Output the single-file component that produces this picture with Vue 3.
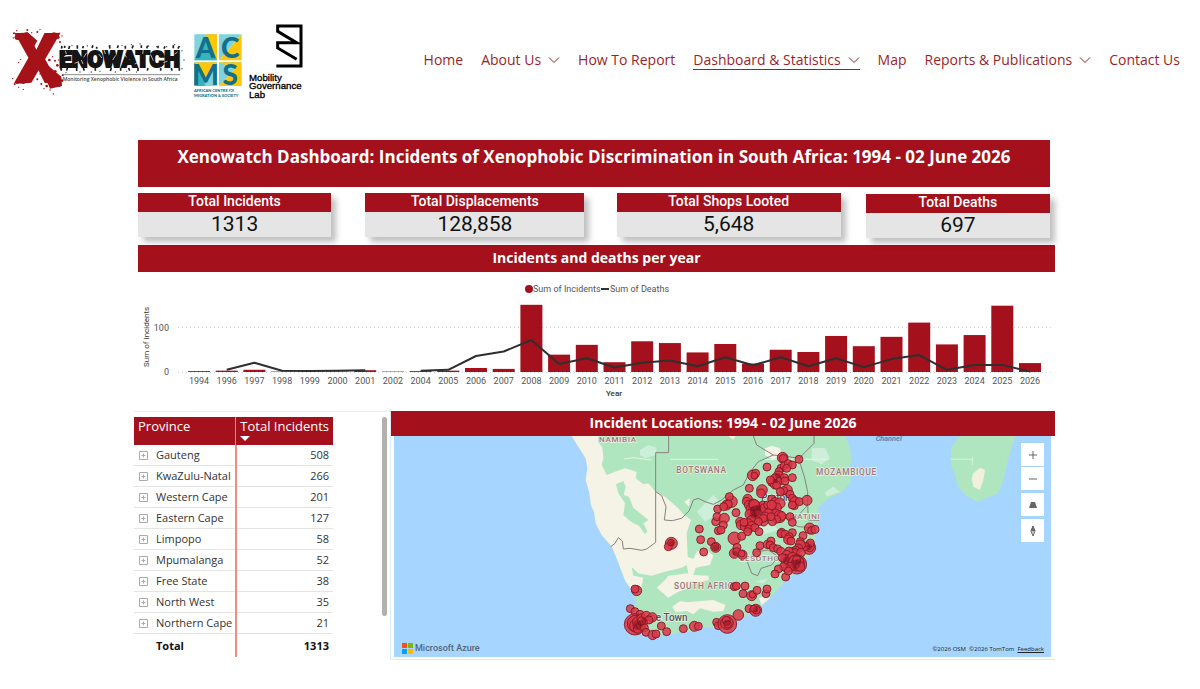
<script setup>
const nav = [
  { label: 'Home' },
  { label: 'About Us', menu: true },
  { label: 'How To Report' },
  { label: 'Dashboard & Statistics', menu: true, active: true },
  { label: 'Map' },
  { label: 'Reports & Publications', menu: true },
  { label: 'Contact Us' },
]

const stats = [
  { label: 'Total Incidents', value: '1313' },
  { label: 'Total Displacements', value: '128,858' },
  { label: 'Total Shops Looted', value: '5,648' },
  { label: 'Total Deaths', value: '697' },
]

const provinces = [
  ['Gauteng', 508],
  ['KwaZulu-Natal', 266],
  ['Western Cape', 201],
  ['Eastern Cape', 127],
  ['Limpopo', 58],
  ['Mpumalanga', 52],
  ['Free State', 38],
  ['North West', 35],
  ['Northern Cape', 21],
]

// year, incidents, deaths
const series = [
  [1994, 2, null], [1996, 3, 5], [1997, 5, 21], [1998, 1, 3], [1999, 1, 2], [2000, 1, 3],
  [2001, 4, 4], [2002, 1, null], [2004, 2, 3], [2005, 3, 5], [2006, 9, 36], [2007, 7, 46],
  [2008, 151, 72], [2009, 39, 18], [2010, 61, 31], [2011, 22, 10], [2012, 69, 21], [2013, 65, 26],
  [2014, 44, 13], [2015, 63, 33], [2016, 19, 15], [2017, 50, 33], [2018, 45, 13], [2019, 81, 31],
  [2020, 58, 11], [2021, 79, 29], [2022, 111, 38], [2023, 62, 5], [2024, 83, 16], [2025, 149, 16],
  [2026, 20, 1],
]
const base = 90
const unit = 0.445
const bars = series.map(([year, n], i) => ({
  year,
  cx: 61 + i * 27.7,
  y: base - n * unit,
  h: n * unit,
}))
let pen = false
const deathPath = series
  .map(([, , d], i) => {
    if (d === null) {
      pen = false
      return ''
    }
    const cmd = pen ? 'L' : 'M'
    pen = true
    return `${cmd}${(61 + i * 27.7).toFixed(1)} ${(base - d * unit).toFixed(1)}`
  })
  .join('')

// incident markers: x, y, radius
const markers = [
  [859, 415, 18], [850, 425, 12], [858, 413, 10], [943, 372], [947, 404], [979, 410], [992, 427, 15],
  [991, 426, 11], [956, 441], [1000, 377], [992, 350], [996, 335], [998, 312],
  [755, 557, 15], [750, 552, 12],
  [736, 611], [750, 620], [765, 628], [750, 658, 32], [752, 656, 25], [754, 662, 20], [758, 650, 15],
  [758, 672, 13], [770, 640, 14], [784, 633, 14], [802, 637, 14], [792, 645, 12], [775, 652], [766, 662],
  [778, 668], [783, 682], [803, 690, 14], [813, 687], [770, 648], [829, 663], [845, 680], [895, 671],
  [928, 664, 15], [940, 664], [995, 652, 12], [1000, 662],
  [1027, 657, 28], [1026, 654, 19], [1024, 646, 12], [1028, 658, 11], [1060, 630, 16], [1092, 611],
  [1112, 616, 18], [1114, 615, 12], [1106, 611, 10],
  [1048, 545], [1054, 543], [1080, 543], [1074, 566], [1100, 572, 15], [1102, 569, 10], [1116, 556], [1143, 566], [1146, 552],
  [1193, 158, 16], [1195, 160, 12], [1242, 163], [1146, 186], [1103, 211, 16], [1112, 205], [1108, 212, 10],
  [1188, 190], [1198, 182], [1210, 176], [1222, 180], [1205, 190], [1182, 200], [1180, 215, 17], [1170, 222, 15],
  [1160, 232], [1170, 238, 14], [1184, 228], [1198, 218], [1222, 218], [1200, 228], [1156, 225], [1175, 241],
  [1093, 250], [1131, 255, 16], [1128, 265, 13], [1206, 255, 16], [1196, 257], [1186, 260], [1215, 268],
  [1222, 280], [1230, 290, 15], [1228, 302], [1243, 290], [1266, 286, 15], [1222, 300],
  [1040, 290, 17], [1033, 275], [1025, 300, 15], [1030, 297, 12], [1053, 323], [1018, 340, 15], [1015, 360],
  [1008, 375], [1016, 305, 12],
  [1088, 282, 14], [1085, 290, 13], [1092, 300, 14], [1105, 296, 14], [1112, 310, 22], [1115, 320, 24],
  [1107, 322, 20], [1118, 310, 18], [1098, 312, 15], [1108, 300, 16], [1125, 322, 15], [1108, 335, 18],
  [1120, 330, 16], [1095, 328, 15], [1110, 345, 14], [1100, 345, 14], [1134, 300, 12], [1138, 310, 14],
  [1148, 300], [1160, 282], [1170, 292, 14], [1184, 295, 16], [1175, 308, 14], [1160, 315, 14], [1150, 325, 14],
  [1140, 335, 14], [1160, 300, 14], [1173, 325, 13], [1184, 335, 18], [1190, 333, 13], [1175, 343], [1162, 350],
  [1158, 335], [1136, 350, 13], [1135, 340], [1120, 350], [1065, 350, 13], [1068, 360, 14], [1080, 365, 14],
  [1090, 355, 14], [1100, 362, 13], [1092, 372], [1110, 368], [1088, 380], [1122, 380], [1077, 352],
  [1215, 335, 12], [1222, 352], [1274, 370, 16], [1280, 376, 12], [1290, 373],
  [1048, 400, 19], [1070, 394], [1056, 427], [1048, 445, 15], [1055, 440], [1072, 449, 14], [1070, 446, 10],
  [1115, 443], [1125, 422], [1148, 418, 13], [1158, 408], [1155, 420], [1165, 428], [1178, 432], [1188, 440, 13],
  [1190, 383, 13], [1188, 386, 12], [1200, 388], [1222, 383], [1213, 395], [1210, 404, 14], [1218, 408],
  [1254, 392], [1246, 410, 12], [1272, 428, 20], [1274, 426, 14], [1276, 414], [1262, 425], [1246, 420, 15],
  [1240, 430, 13], [1232, 435], [1222, 440], [1230, 445, 14], [1248, 443, 13], [1212, 438],
  [1205, 450, 14], [1202, 465, 15], [1200, 460, 12], [1212, 470, 14], [1222, 455, 13], [1236, 478, 29],
  [1234, 474, 24], [1238, 472, 18], [1230, 480, 15], [1235, 464, 12], [1215, 485, 13], [1245, 485, 14], [1205, 490],
  [1195, 485], [1192, 458], [1180, 492, 12], [1170, 507, 12], [1202, 516, 12], [1210, 498],
]

// places where many markers pile up and read darker
const piles = [
  [1112, 318, 17], [1106, 330, 10], [1120, 308, 9], [1102, 312, 8], [1232, 478, 14], [1240, 470, 9],
  [1202, 464, 8], [1272, 426, 9], [756, 660, 14], [768, 655, 9], [776, 645, 7], [1026, 654, 10],
  [860, 414, 8], [992, 427, 8], [1112, 614, 8], [1178, 212, 8], [1172, 228, 7], [1050, 444, 7],
]

const red = [
  [42, 70, 3], [50, 62, 2], [40, 84, 2], [82, 60, 3], [95, 68, 2], [120, 58, 2], [112, 66, 3], [186, 78, 2],
  [180, 96, 3], [148, 150, 4], [158, 140, 2], [165, 152, 3], [172, 166, 4], [182, 176, 3], [176, 150, 2],
  [188, 196, 3], [186, 212, 4], [178, 228, 3], [150, 240, 2], [140, 228, 4], [124, 222, 3], [112, 208, 3],
  [160, 252, 2], [44, 222, 3], [56, 232, 2], [70, 238, 2], [38, 206, 2], [62, 148, 2], [56, 158, 2],
  [128, 180, 3], [120, 192, 2], [170, 206, 8], [158, 218, 9], [142, 208, 8], [154, 190, 7], [166, 184, 4],
  [52, 82, 8], [66, 76, 8], [84, 78, 7], [162, 74, 7], [174, 82, 5], [56, 212, 7], [70, 216, 6], [132, 236, 2],
]
const ink = [
  [186, 112, 2], [198, 188, 2], [216, 106, 2], [240, 186, 2], [262, 108, 2], [300, 184, 2],
  [330, 106, 2], [366, 106, 2], [394, 104, 2], [420, 102, 2], [446, 108, 2],
  [470, 110, 2], [500, 110, 2], [520, 110, 2], [546, 122, 2], [552, 150, 2], [546, 176, 2],
  [410, 186, 2], [380, 184, 2], [346, 186, 2], [524, 104, 2], [274, 186, 2],
]
</script>

<template>
  <div class="page">
    <header class="site-header">
      <a class="brand" href="#" aria-label="Xenowatch home">
        <svg viewBox="0 0 960 300" class="logo">
          <text x="42" y="219" class="lx">X</text>
          <path d="M44 74L82 66L112 92L96 120ZM142 70L182 68L94 218L46 222ZM118 160L146 168L184 200L186 228L150 236Z" fill="#a51217" />
          <circle v-for="(d, i) in red" :key="'r' + i" :cx="d[0]" :cy="d[1]" :r="d[2]" fill="#a51217" />
          <text x="178" y="171" class="lw">ENOWATCH</text>
          <circle v-for="(d, i) in ink" :key="'k' + i" :cx="d[0]" :cy="d[1]" :r="d[2]" fill="#444" />
          <path d="M184 116l2-8M194 114v-7M206 117l3-9M232 116v-10M248 115l2-7M276 114l3-8M290 116v-6M330 116l-2-10M352 114l3-8M376 116v-9M396 115l4-9M424 114v-8M440 115l3-8M474 115v-8M492 116l3-7M520 115v-9M534 116l4-8M184 174v8M202 174l-2 8M230 174v9M250 174l3 8M286 174v8M334 174l-3 9M362 174v8M386 174l3 8M414 174v9M444 174l-2 8M482 174v8M514 174l2 8M538 174v8" stroke="#222" stroke-width="5" />
          <path d="M192 140l14-3M224 160l12-5M260 128l-9 14M296 132l10 12M338 150l9-14M372 128l7 14M404 162l12-5M452 134l8 18M490 158l12-4M524 132l9-6M196 122l3 10M244 150l5 12M312 120l4 12M430 118l-2 14M476 140l6 8" stroke="#fff" stroke-width="2" />
          <path d="M186 194H540" stroke="#555" stroke-width="2" />
          <text x="188" y="212" class="ls">Monitoring Xenophobic Violence in South Africa</text>

          <path d="M583 73h68v78h-68zM657 151V73h68zM583 157h68v71h-68zM657 157h68l-68 71z" fill="#7ed3dc" />
          <path d="M617 73h34v78zM657 151L725 73v78zM583 157h68l-34 46zM657 157h68v28zM657 228L725 157v71z" fill="#fdc60b" />
          <path d="M617 80l-34 71h68zM583 157v71h34z" fill="#35b5bb" />
          <g class="la">
            <text x="617" y="145" text-anchor="middle">A</text>
            <text x="691" y="145" text-anchor="middle">C</text>
            <text x="617" y="224" text-anchor="middle">M</text>
            <text x="691" y="224" text-anchor="middle">S</text>
          </g>
          <g class="lc">
            <text x="582" y="245">AFRICAN CENTRE <tspan font-size="8">FOR</tspan></text>
            <text x="582" y="260">MIGRATION &amp; SOCIETY</text>
          </g>

          <path d="M829 168H903V48H833V64L890 98H833V114L890 148" fill="none" stroke="#000" stroke-width="9" />
          <g class="lm">
            <text x="747" y="213">Mobility</text>
            <text x="747" y="238">Governance</text>
            <text x="747" y="263">Lab</text>
          </g>
        </svg>
      </a>
      <nav class="nav" aria-label="Main">
        <a v-for="n in nav" :key="n.label" href="#" :class="{ active: n.active }">
          {{ n.label }}
          <svg v-if="n.menu" class="chev" viewBox="0 0 12 8"><path d="M1 1.5L6 6.5L11 1.5" fill="none" stroke="currentColor" /></svg>
        </a>
      </nav>
    </header>

    <main class="dash">
      <h1 class="banner">Xenowatch Dashboard: Incidents of Xenophobic Discrimination in South Africa: 1994 - 02 June 2026</h1>

      <section class="stats">
        <article v-for="s in stats" :key="s.label" class="stat">
          <h2>{{ s.label }}</h2>
          <p>{{ s.value }}</p>
        </article>
      </section>

      <section class="trend">
        <h2 class="bar-title">Incidents and deaths per year</h2>
        <svg class="chart" viewBox="0 0 917 122" role="img" aria-label="Incidents and deaths per year">
          <circle cx="391" cy="7" r="4" fill="#a4101c" />
          <text x="395" y="10" class="leg">Sum of Incidents</text>
          <path d="M463 7h8" stroke="#333" stroke-width="2" />
          <text x="472" y="10" class="leg">Sum of Deaths</text>
          <path d="M40 45.500H914M40 90.500H914" stroke="#d4d4d4" stroke-dasharray="1 3" />
          <text x="31" y="49" text-anchor="end" class="tick">100</text>
          <text x="31" y="93" text-anchor="end" class="tick">0</text>
          <text transform="translate(11 85) rotate(-90)" class="axis">Sum of Incidents</text>
          <rect v-for="b in bars" :key="b.year" :x="b.cx - 11" :y="b.y" width="22" :height="b.h" fill="#a4101c" />
          <path :d="deathPath" fill="none" stroke="#2f2f2f" stroke-width="2" stroke-linejoin="round" />
          <text v-for="b in bars" :key="b.year" :x="b.cx" y="102" text-anchor="middle" class="tick">{{ b.year }}</text>
          <text x="476" y="114" text-anchor="middle" class="year">Year</text>
        </svg>
      </section>

      <section class="lower">
        <div class="table-pane">
          <table>
            <thead>
              <tr>
                <th scope="col">Province</th>
                <th scope="col">Total Incidents<span class="sort"></span></th>
              </tr>
            </thead>
            <tbody>
              <tr v-for="p in provinces" :key="p[0]">
                <th scope="row">
                  <button class="expand" :aria-label="'Expand ' + p[0]">
                    <svg viewBox="0 0 9 9"><path d="M.5.5h8v8h-8zM2.500 4.500h4M4.500 2.500v4" fill="none" stroke="#aaa" /></svg>
                  </button>{{ p[0] }}
                </th>
                <td>{{ p[1] }}</td>
              </tr>
            </tbody>
            <tfoot>
              <tr>
                <th scope="row">Total</th>
                <td>1313</td>
              </tr>
            </tfoot>
          </table>
          <div class="scroll"></div>
        </div>

        <div class="map-pane">
          <h2 class="map-title">Incident Locations: 1994 - 02 June 2026</h2>
          <div class="map">
            <svg viewBox="27 93 1971 663" role="img" aria-label="Map of incident locations">
              <rect x="27" y="93" width="1971" height="663" fill="#a6d5ff" />
              <path d="M560 93L580 125L602 160L607 190L602 225L612 260L618 300L628 325L632 355L650 390L680 425L695 460L708 495L722 530L745 562L752 590L745 620L740 655L760 675L800 695L830 690L860 688L900 680L935 678L960 665L985 668L1030 680L1050 652L1090 630L1125 610L1155 580L1200 530L1245 490L1275 450L1290 405L1292 375L1303 345L1300 305L1325 285L1370 262L1395 235L1400 200L1392 185L1402 165L1395 130L1382 93Z" fill="#afe6bf" />
              <path d="M560 93H640L640 112L652 128L655 160L650 180L665 210L690 200L720 190L755 200L752 220L775 238L790 235L812 260L840 275L880 310L892 325L918 345L905 385L908 455L925 462L935 440L960 430L985 452L975 480L932 488L925 510L970 512L972 525L925 535L910 550L880 560L850 578L815 548L840 525L850 512L910 505L905 480L890 488L840 500L800 512L760 505L740 486L745 512L775 518L770 545L745 560L722 530L708 495L695 460L680 425L650 390L632 355L628 325L618 300L612 260L602 225L607 190L602 160L580 125Z" fill="#f5f2e6" />
              <path d="M693 238L715 228L722 245L716 270L732 275L745 308L790 345L775 355L787 378L780 388L762 362L740 352L715 330L720 295L700 265Z" fill="#afe6bf" />
              <path d="M862 605L885 588L905 592L985 585L1022 600L1015 618L985 620L945 610L925 628L905 618L872 622ZM1140 130L1160 122L1185 130L1190 150L1165 165L1140 150ZM1130 600L1122 580L1150 565L1155 580ZM898 290L915 280L912 305ZM1030 93H1052L1045 104Z" fill="#f5f2e6" />
              <path d="M765 135L790 120L815 128L812 150L780 160L765 150ZM935 320L985 270L1000 285L990 330L960 350ZM1280 130L1320 128L1335 160L1310 178L1280 165ZM1320 262L1345 245L1365 260L1325 275ZM1100 370L1160 355L1180 375L1130 390ZM1150 520L1135 535L1110 530Z" fill="#cdeed9" />
              <path d="M717 162L745 158L800 165M857 163H1000M1140 163H1330" stroke="#e6f5e4" stroke-width="3" fill="none" />
              <path d="M1723 93L1697 130L1698 180L1712 215L1718 245L1742 270L1775 291L1820 272L1840 265L1855 225L1868 170L1882 120L1893 93Z" fill="#afe6bf" />
              <path d="M1765 205L1785 188L1800 195L1795 225L1785 255L1765 245L1760 220Z" fill="#f1f0dd" />
              <path d="M1697 163H1765M1762 155V180" stroke="#d6f1da" stroke-width="3" />
              <g fill="none" stroke="#8a8080" stroke-width="3">
                <path d="M851 93V143H812V412L785 432L770 436L735 430L715 432L712 408L700 398L690 415L677 425" />
                <path d="M812 260L830 272L843 305L838 345L862 347L890 340L912 318L925 285L940 280L960 290L985 298L1010 285L1045 255L1075 240L1092 205L1120 170L1165 150L1115 120L1105 93" />
                <path d="M1165 150L1210 155L1242 160M1287 93V115L1252 150L1242 165L1258 215L1268 260L1268 300L1250 320L1222 355L1240 365L1280 368M1268 300L1270 345L1303 346M1085 465L1115 440L1150 435L1180 455L1160 480L1128 490L1118 512L1100 505Z" />
              </g>
              <g class="places">
                <text x="642" y="111" font-size="24">NAMIBIA</text>
                <text x="874" y="205">BOTSWANA</text>
                <text x="1293" y="211">MOZAMBIQUE</text>
                <text x="867" y="552">SOUTH AFRICA</text>
                <text x="1065" y="469" font-size="24">LESOTHO</text>
                <text x="1182" y="341" font-size="24">ESWATINI</text>
                <text x="1472" y="109" class="sea">Channel</text>
                <text x="760" y="648" class="town">Cape Town</text>
                <text x="1128" y="288" class="town">Pretoria</text>
              </g>
              <circle v-for="(m, i) in markers" :key="i" :cx="m[0]" :cy="m[1]" :r="m[2] || 12" class="dot" />
              <circle v-for="(m, i) in piles" :key="'p' + i" :cx="m[0]" :cy="m[1]" :r="m[2]" class="pile" />
            </svg>
            <div class="azure">
              <svg viewBox="0 0 11 11"><path fill="#f25022" d="M0 0h5v5H0z" /><path fill="#7fba00" d="M6 0h5v5H6z" /><path fill="#00a4ef" d="M0 6h5v5H0z" /><path fill="#ffb900" d="M6 6h5v5H6z" /></svg>
              Microsoft Azure
            </div>
            <div class="credit">©2026 OSM&nbsp; ©2026 TomTom&nbsp; <a href="#">Feedback</a></div>
            <div class="controls">
              <div class="zoom">
                <button aria-label="Zoom in"><svg viewBox="0 0 12 12"><path d="M2 6h8M6 2v8" stroke="#666" fill="none" /></svg></button>
                <button aria-label="Zoom out"><svg viewBox="0 0 12 12"><path d="M2 6h8" stroke="#666" fill="none" /></svg></button>
              </div>
              <button aria-label="Pitch"><svg viewBox="0 0 12 12"><path d="M4 3h4l2 6H2z" fill="#666" /></svg></button>
              <button aria-label="Compass"><svg viewBox="0 0 12 12"><path d="M6 1l2 5-2 5-2-5z" fill="none" stroke="#666" /><path d="M6 1l2 5H4zM6 6v5" fill="#666" stroke="#666" stroke-width=".5" /></svg></button>
            </div>
          </div>
        </div>
      </section>
    </main>
  </div>
</template>

<style>
body { background: #fff; }
</style>

<style scoped>
.page { font-family: "Open Sans", "Noto Sans", sans-serif; color: #333; }
h1, h2, p { margin: 0; }
button { padding: 0; border: 0; background: none; cursor: pointer; }

.site-header { display: flex; justify-content: space-between; align-items: center; padding: 10px 20px 0 0; }
.brand { flex: none; width: 320px; }
.logo { display: block; width: 100%; }
.lx { font: 900 210px Roboto, sans-serif; fill: #a51217; }
.lw { font: 900 67px Roboto, sans-serif; fill: #151515; stroke: #151515; stroke-width: 6px; }
.ls { font: 600 15px "Open Sans", sans-serif; fill: #444; }
.la { font: 900 84px Lato, sans-serif; fill: #12708c; }
.lc { font: 900 12px Lato, sans-serif; fill: #12708c; }
.lm { font: 29px "Liberation Sans", sans-serif; fill: #000; stroke: #000; stroke-width: 1px; }

.nav { display: flex; gap: 18px; font-size: 14px; line-height: 18px; white-space: nowrap; }
.nav a { display: flex; align-items: center; gap: 7px; color: #9c1f26; text-decoration: none; border-bottom: 1px solid transparent; padding-top: 1px; }
.nav a.active { border-color: #9c1f26; }
.chev { width: 12px; height: 8px; }

.dash { margin: 30px 145px 0 138px; }
.banner { margin-right: 5px; height: 47px; padding-top: 5px; box-sizing: border-box; background: #a4101c; color: #fff; font-size: 17px; line-height: 24px; font-weight: 700; text-align: center; white-space: nowrap; }

.stats { display: grid; grid-template-columns: 193fr 34fr 219fr 32fr 224fr 25fr 184fr; margin: 6px 5px 8px 0; font-family: Roboto, sans-serif; text-align: center; }
.stat { background: #e5e5e5; box-shadow: 5px 5px 6px rgba(0, 0, 0, 0.25); }
.stat:nth-child(2) { grid-column: 3; }
.stat:nth-child(3) { grid-column: 5; }
.stat:nth-child(4) { grid-column: 7; position: relative; top: 1px; }
.stat h2 { background: #a4101c; color: #fff; font-size: 14px; line-height: 17px; font-weight: 500; height: 19px; }
.stat p { color: #111; font-size: 21px; line-height: 25px; }

.bar-title { background: #a4101c; color: #fff; font-size: 14px; line-height: 25px; height: 27px; text-align: center; }
.chart { display: block; width: 100%; margin-top: 10px; }
.leg { font: 9px Roboto, sans-serif; fill: #555; }
.tick { font: 9px Roboto, sans-serif; fill: #555; }
.axis { font: 8px Roboto, sans-serif; fill: #333; }
.year { font: 500 8px Roboto, sans-serif; fill: #333; }

.lower { display: grid; grid-template-columns: 256fr 665fr; margin: 7px 0 0 -4px; }
.table-pane { display: flex; justify-content: space-between; align-items: flex-start; border-top: 1px solid #eee; padding: 5px 3px 0 0; }
table { border-collapse: collapse; width: 199px; font-size: 11px; }
thead th { background: #a4101c; color: #fff; font-size: 13px; line-height: 18px; font-weight: 400; text-align: left; vertical-align: top; height: 28px; padding: 0 4px; white-space: nowrap; }
th:first-child { width: 98px; border-right: 2px solid #f28b82; }
thead th:first-child { border-right: 1px solid #e08a8a; }
.sort { display: block; width: 0; border: 5px solid transparent; border-top-color: #fff; border-bottom: 0; margin-top: 1px; }
tbody th, tbody td { height: 20px; padding: 0 4px; line-height: 18px; border-bottom: 1px solid #e4e4e4; white-space: nowrap; }
tbody th { font-weight: 400; text-align: left; padding-right: 0; }
td { text-align: right; }
.expand { width: 9px; height: 9px; margin: 0 8px 0 1px; vertical-align: -1px; }
.expand svg { display: block; width: 9px; height: 9px; }
tfoot th, tfoot td { height: 23px; padding: 0 4px; color: #111; font-weight: 700; }
tfoot th { text-align: left; padding-left: 22px; }
.scroll { width: 5px; height: 199px; border-radius: 3px; background: #b3b0ad; }

.map-pane { border: 1px solid #ddebf5; border-width: 0 0 1px 1px; padding-bottom: 2px; }
.map-title { background: #a4101c; color: #fff; font-size: 14px; line-height: 23px; height: 25px; font-weight: 700; text-align: center; }
.map { position: relative; margin: 0 4px 0 3px; }
.map > svg { display: block; width: 100%; }
.places { font: 500 25px Roboto, sans-serif; fill: #a1737b; letter-spacing: 2px; stroke: #e8f3e4; stroke-width: 4px; paint-order: stroke; }
.sea { font: italic 700 22px Roboto, sans-serif; fill: #5b86b5; stroke: none; letter-spacing: 0; }
.town { font: 500 30px Roboto, sans-serif; fill: #555; letter-spacing: 0; }
.dot { fill: #dc3545; fill-opacity: 0.85; stroke: #7a1723; stroke-width: 3px; stroke-opacity: 0.85; }
.pile { fill: #7a0f1c; fill-opacity: 0.5; }
.azure { position: absolute; left: 8px; bottom: 2px; display: flex; align-items: center; gap: 2px; font: 500 9px/13px Roboto, sans-serif; color: #52677d; }
.azure svg { width: 11px; height: 11px; }
.credit { position: absolute; right: 7px; bottom: 2px; font-size: 6px; line-height: 12px; color: #222; }
.credit a { color: #222; }
.controls { position: absolute; right: 7px; top: 7px; display: flex; flex-direction: column; gap: 3px; }
.controls button { display: flex; align-items: center; justify-content: center; width: 23px; height: 23px; background: #fff; }
.zoom { display: grid; gap: 1px; }
.controls svg { width: 12px; height: 12px; }
</style>
